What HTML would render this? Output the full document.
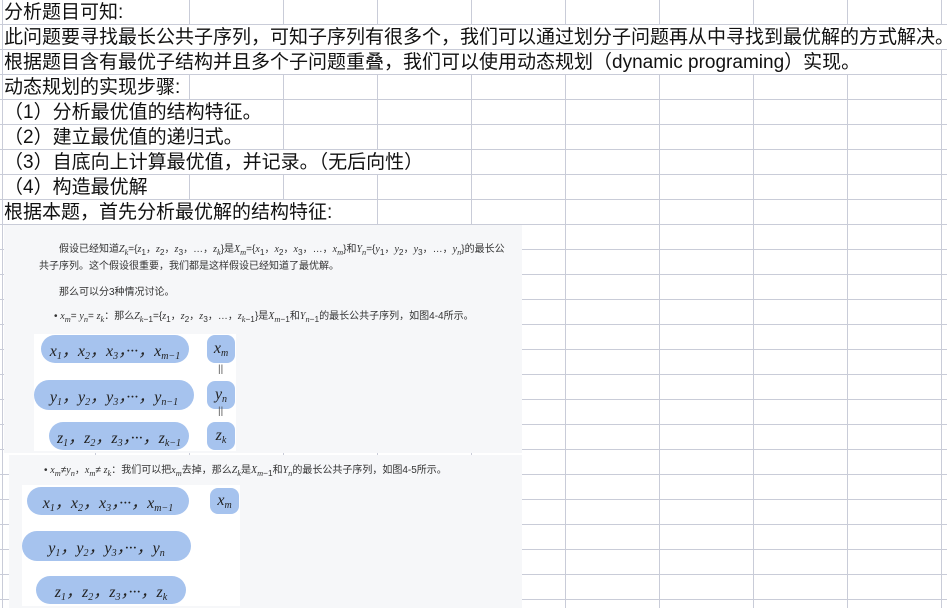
<!DOCTYPE html>
<html><head><meta charset="utf-8"><style>
*{margin:0;padding:0;box-sizing:border-box}
body{width:947px;height:608px;overflow:hidden;background:#fff;position:relative;font-family:"Liberation Sans","Noto Sans CJK SC",sans-serif}
.h{position:absolute;left:0;width:947px;height:1px;background:#c9ccd8}
.v{position:absolute;top:0;width:1px;height:608px;background:#c9ccd8}
.row{position:absolute;left:4px;height:24px;line-height:25px;font-size:19px;color:#111;white-space:nowrap;background:#fff;padding-right:1px}
.fig{position:absolute;background:#f6f7f9}
.p{position:absolute;font-size:10px;color:#333;white-space:nowrap}
.p i{font-family:"Liberation Serif",serif}
.wb{position:absolute;background:#fff}
.blob{position:absolute;background:#a6c3ee;border-radius:16px;font-family:"Liberation Serif",serif;font-style:italic;font-size:16px;color:#222;display:flex;align-items:center;justify-content:center;white-space:nowrap}
.blob sub{font-size:10px;position:relative;top:3px;vertical-align:baseline}
.eq{position:absolute;font-size:10px;color:#555}
</style></head><body>
<div id="g"></div>
<script>
var g=document.getElementById('g'),s='';
for(var y=24;y<608;y+=25)s+='<div class="h" style="top:'+y+'px"></div>';
s+='<div class="v" style="left:2px"></div>';
for(var x=95;x<947;x+=94)s+='<div class="v" style="left:'+x+'px"></div>';
g.innerHTML=s;
</script>
<div class="row" style="top:0px">分析题目可知:</div>
<div class="row" style="top:25px">此问题要寻找最长公共子序列，可知子序列有很多个，我们可以通过划分子问题再从中寻找到最优解的方式解决。</div>
<div class="row" style="top:50px">根据题目含有最优子结构并且多个子问题重叠，我们可以使用动态规划（dynamic programing）实现。</div>
<div class="row" style="top:75px">动态规划的实现步骤:</div>
<div class="row" style="top:100px">（1）分析最优值的结构特征。</div>
<div class="row" style="top:125px">（2）建立最优值的递归式。</div>
<div class="row" style="top:150px">（3）自底向上计算最优值，并记录。（无后向性）</div>
<div class="row" style="top:175px">（4）构造最优解</div>
<div class="row" style="top:200px">根据本题，首先分析最优解的结构特征:</div>

<div class="fig" style="left:4px;top:225px;width:518px;height:228px"></div>
<div class="p" style="left:59px;top:240px">假设已经知道<i>Z<sub>k</sub></i>={<i>z</i><sub>1</sub>，<i>z</i><sub>2</sub>，<i>z</i><sub>3</sub>，…，<i>z<sub>k</sub></i>}是<i>X<sub>m</sub></i>={<i>x</i><sub>1</sub>，<i>x</i><sub>2</sub>，<i>x</i><sub>3</sub>，…，<i>x<sub>m</sub></i>}和<i>Y<sub>n</sub></i>={<i>y</i><sub>1</sub>，<i>y</i><sub>2</sub>，<i>y</i><sub>3</sub>，…，<i>y<sub>n</sub></i>}的最长公</div>
<div class="p" style="left:39px;top:257px">共子序列。这个假设很重要，我们都是这样假设已经知道了最优解。</div>
<div class="p" style="left:59px;top:283px">那么可以分3种情况讨论。</div>
<div class="p" style="left:54px;top:307px">• <i>x<sub>m</sub></i>= <i>y<sub>n</sub></i>= <i>z<sub>k</sub></i>：那么<i>Z<sub>k</sub></i><sub>−1</sub>={<i>z</i><sub>1</sub>，<i>z</i><sub>2</sub>，<i>z</i><sub>3</sub>，…，<i>z<sub>k</sub></i><sub>−1</sub>}是<i>X<sub>m</sub></i><sub>−1</sub>和<i>Y<sub>n</sub></i><sub>−1</sub>的最长公共子序列，如图4-4所示。</div>
<div class="wb" style="left:34px;top:334px;width:202px;height:117px"></div>
<div class="blob" style="left:41px;top:335px;width:148px;height:28px"><span>x<sub>1</sub>，x<sub>2</sub>，x<sub>3</sub>，···，x<sub>m−1</sub></span></div>
<div class="blob" style="left:207px;top:335px;width:28px;height:28px;border-radius:8px"><span>x<sub>m</sub></span></div>
<div class="eq" style="left:218px;top:364px">||</div>
<div class="blob" style="left:34px;top:380px;width:160px;height:30px"><span>y<sub>1</sub>，y<sub>2</sub>，y<sub>3</sub>，···，y<sub>n−1</sub></span></div>
<div class="blob" style="left:207px;top:381px;width:28px;height:28px;border-radius:8px"><span>y<sub>n</sub></span></div>
<div class="eq" style="left:218px;top:406px">||</div>
<div class="blob" style="left:49px;top:422px;width:140px;height:28px"><span>z<sub>1</sub>，z<sub>2</sub>，z<sub>3</sub>，···，z<sub>k−1</sub></span></div>
<div class="blob" style="left:207px;top:422px;width:28px;height:28px;border-radius:8px"><span>z<sub>k</sub></span></div>

<div class="fig" style="left:9px;top:455px;width:513px;height:153px"></div>
<div class="p" style="left:44px;top:461px">• <i>x<sub>m</sub></i>≠<i>y<sub>n</sub></i>，<i>x<sub>m</sub></i>≠ <i>z<sub>k</sub></i>：我们可以把<i>x<sub>m</sub></i>去掉，那么<i>Z<sub>k</sub></i>是<i>X<sub>m</sub></i><sub>−1</sub>和<i>Y<sub>n</sub></i>的最长公共子序列，如图4-5所示。</div>
<div class="wb" style="left:22px;top:485px;width:218px;height:121px"></div>
<div class="blob" style="left:27px;top:487px;width:162px;height:28px"><span>x<sub>1</sub>，x<sub>2</sub>，x<sub>3</sub>，···，x<sub>m−1</sub></span></div>
<div class="blob" style="left:210px;top:488px;width:29px;height:26px;border-radius:8px"><span>x<sub>m</sub></span></div>
<div class="blob" style="left:22px;top:531px;width:169px;height:30px"><span>y<sub>1</sub>，y<sub>2</sub>，y<sub>3</sub>，···，y<sub>n</sub></span></div>
<div class="blob" style="left:36px;top:576px;width:150px;height:28px"><span>z<sub>1</sub>，z<sub>2</sub>，z<sub>3</sub>，···，z<sub>k</sub></span></div>
</body></html>
